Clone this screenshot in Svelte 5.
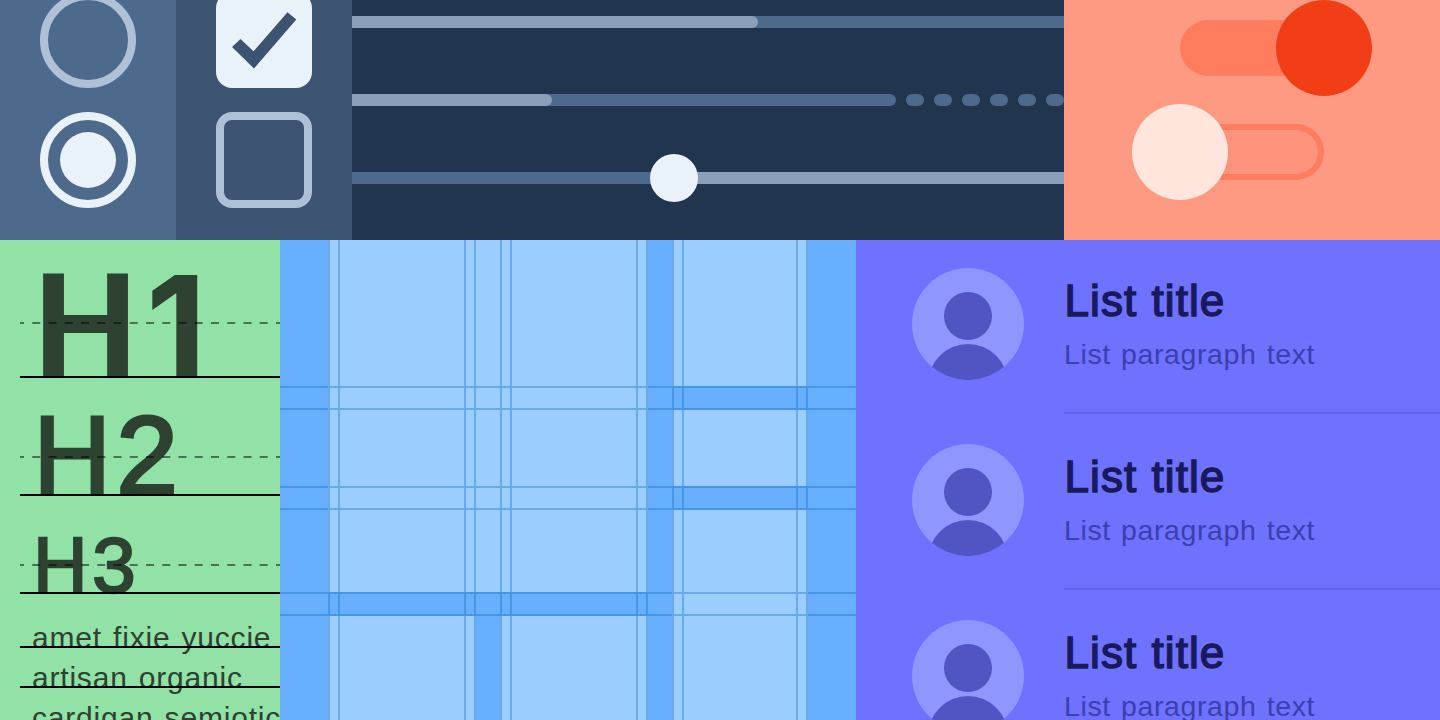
<script>
  const columns = [48, 12, 124, 12, 24, 12, 124, 12, 24, 12, 112, 12, 48];
  const rows = [146, 24, 76, 24, 82, 24, 104];
  const insets = [1, 3, 5, 7, 9, 11];

  function isGutter(r, c) {
    if (c === 0 || c === 8 || c === 12) return true;
    if (c > 8) return r === 1 || r === 3;
    return r === 5 || (r === 6 && c === 4);
  }

  const cells = rows.flatMap((_, r) =>
    columns.map((_, c) => ({
      gutter: isGutter(r, c),
      sides: insets.includes(c),
      ends: r % 2 === 1
    }))
  );

  const template = (sizes) => sizes.map((s) => `${s}px`).join(' ');
  const people = [1, 2, 3];
  const copy = ['amet fixie yuccie', 'artisan organic', 'cardigan semiotics'];
</script>

{#snippet midline()}
  <svg class="midline" width="260" height="2" viewBox="0 0 260 2" aria-hidden="true">
    <line x1="0" y1="1" x2="260" y2="1" stroke="#000" stroke-opacity="0.5" stroke-width="2" stroke-dasharray="8 8.25" stroke-dashoffset="4" />
  </svg>
{/snippet}

<main>
  <div class="top">
    <section class="choices radios">
      <span class="radio"></span>
      <span class="radio on"><i></i></span>
    </section>
    <section class="choices checks">
      <span class="check on">
        <svg width="96" height="96" viewBox="0 0 96 96"><path d="M16 55 24.5 47 37.5 59.3 71.5 20.2 80.3 27.6 38 76.6Z" fill="#3c5472" /></svg>
      </span>
      <span class="check"></span>
    </section>
    <section class="sliders">
      <div class="bar full"><div class="fill first"></div></div>
      <div class="buffer">
        <div class="bar loaded"><div class="fill second"></div></div>
        {#each Array(6) as _}<i class="dash"></i>{/each}
      </div>
      <div class="range">
        <div class="bar left"></div>
        <div class="bar right"></div>
        <span class="thumb"></span>
      </div>
    </section>
    <section class="toggles">
      <div class="toggle on"><span class="knob"></span></div>
      <div class="toggle off"><span class="knob"></span></div>
    </section>
  </div>

  <div class="bottom">
    <section class="type">
      <div class="sample s1">
        <h1><b>H</b><span>1</span></h1>
        {@render midline()}
      </div>
      <div class="sample s2">
        <h2><b>H</b>2</h2>
        {@render midline()}
      </div>
      <div class="sample s3">
        <h3><b>H</b>3</h3>
        {@render midline()}
      </div>
      <div class="copy">
        {#each copy as line}
          <p>{line}</p>
        {/each}
      </div>
    </section>

    <section class="layout" style:grid-template-columns={template(columns)} style:grid-template-rows={template(rows)}>
      {#each cells as cell}
        <div class="cell" class:gutter={cell.gutter} class:sides={cell.sides} class:ends={cell.ends}></div>
      {/each}
    </section>

    <section class="list">
      {#each people as person (person)}
        <article>
          <div class="avatar">
            <svg width="112" height="112" viewBox="0 0 112 112">
              <circle cx="56" cy="48" r="24" fill="#5155c3" />
              <circle cx="56" cy="116" r="40" fill="#5155c3" />
            </svg>
          </div>
          <div class="info">
            <h4>List title</h4>
            <p>List paragraph text</p>
          </div>
        </article>
      {/each}
    </section>
  </div>
</main>

<style>
  :global(body) { margin: 0; overflow: hidden; }
  main {
    width: 1440px;
    height: 720px;
    overflow: hidden;
    font-family: "Liberation Sans", Arial, sans-serif;
  }
  main, main * { box-sizing: border-box; }
  h1, h2, h3, h4, p { margin: 0; font-weight: 400; }
  svg { display: block; }
  section { overflow: hidden; }
  .top { display: grid; grid-template-columns: 176px 176px 712px 376px; height: 240px; }
  .bottom { display: grid; grid-template-columns: 280px 576px 584px; height: 480px; }

  .choices { display: flex; flex-direction: column; align-items: center; gap: 24px; }
  .choices > :first-child { margin-top: -8px; }
  .radios { background: #4d698c; }
  .checks { background: #3c5472; }
  .radio, .check { flex: none; display: grid; place-items: center; width: 96px; height: 96px; border: 8px solid #afc0d9; }
  .radio { border-radius: 50%; }
  .radio.on { border-color: #e9f1f9; }
  .radio i { width: 56px; height: 56px; border-radius: 50%; background: #e9f1f9; }
  .check { border-radius: 16px; }
  .check.on { border: 0; background: #e9f1f9; }

  .sliders { background: #22354e; padding-top: 16px; display: flex; flex-direction: column; gap: 66px; }
  .bar { height: 12px; background: #4d698c; }
  .fill { height: 12px; background: #8b9fba; border-radius: 0 6px 6px 0; }
  .first { width: 406px; }
  .second { width: 200px; }
  .buffer { display: flex; gap: 10px; }
  .loaded { width: 544px; border-radius: 0 6px 6px 0; }
  .dash { width: 18px; height: 12px; border-radius: 6px; background: #4d698c; }
  .range { display: flex; position: relative; }
  .left { width: 322px; }
  .right { flex: 1; background: #8b9fba; }
  .thumb { position: absolute; left: 298px; top: -18px; width: 48px; height: 48px; border-radius: 50%; background: #e9f1f9; }

  .toggles { background: #ff9a82; padding: 20px 0 0 116px; display: flex; flex-direction: column; gap: 48px; }
  .toggle { position: relative; width: 144px; height: 56px; border-radius: 28px; background: #ff7c5e; }
  .toggle.off { background: #ff937b; box-shadow: inset 0 0 0 6px #ff7c5e; }
  .knob { position: absolute; top: -20px; width: 96px; height: 96px; border-radius: 50%; }
  .on .knob { right: -48px; background: #f13e17; }
  .off .knob { left: -48px; background: #ffe5db; }

  .type { background: #92e2a7; color: #2d4231; padding-left: 20px; white-space: nowrap; }
  .sample { position: relative; border-bottom: 2px solid #000; }
  .sample h1, .sample h2, .sample h3 { position: absolute; left: 12px; bottom: -1px; line-height: 0; height: 0; }
  .sample b { display: inline-block; font-weight: inherit; transform-origin: left; }
  .midline { position: absolute; left: 0; }
  .s1 { height: 138px; }
  .s1 .midline { top: 82px; }
  .s2 { height: 118px; }
  .s2 .midline { top: 78px; }
  .s3 { height: 98px; }
  .s3 .midline { top: 68px; }
  .sample::after { content: ""; position: absolute; left: 0; right: 0; bottom: -2px; height: 2px; background: #000; }
  h1 { font-size: 151px; font-weight: 700; transform: translateY(-51.9px); }
  h1 b { transform: translateX(1.6px) scaleX(0.955); }
  h1 span { font-family: Inter, sans-serif; font-size: 140px; margin-left: 5px; }
  h2 { font-size: 111px; letter-spacing: 4px; -webkit-text-stroke: 3.2px #2d4231; transform: translateY(-39.2px); }
  h2 b { transform: translateX(1.4px) scaleX(0.965); }
  h3 { font-size: 78px; letter-spacing: 3.8px; -webkit-text-stroke: 2.4px #2d4231; transform: translateY(-27.8px); }
  h3 b { transform: translateX(1.2px) scaleX(0.96); }
  .copy p { position: relative; height: 40px; padding-left: 12px; font-size: 30px; line-height: 40px; letter-spacing: 0.8px; word-spacing: 2px; }
  .copy { padding-top: 24px; }
  .copy p::after { content: ""; position: absolute; left: 0; right: 0; bottom: 10px; height: 2px; background: #000; }

  .layout { display: grid; }
  .cell { background: #9bcdff; border: 0 solid #6aaae8; }
  .gutter { background: #68b0ff; border-color: #4796e8; }
  .sides { border-left-width: 2px; border-right-width: 2px; }
  .ends { border-top-width: 2px; border-bottom-width: 2px; }

  .list { background: #6e72ff; }
  article { display: flex; gap: 40px; height: 176px; padding: 28px 0 0 56px; }
  .avatar { flex: none; width: 112px; height: 112px; border-radius: 50%; overflow: hidden; background: #8e96ff; }
  .info { flex: 1; height: 146px; border-bottom: 2px solid #6265e6; white-space: nowrap; }
  h4 { margin-top: 8px; font-size: 44px; line-height: 50px; letter-spacing: 1.05px; text-indent: 0.6px; word-spacing: 1px; color: #181a5c; -webkit-text-stroke: 1.5px #181a5c; }
  .info p { margin-top: 11px; font-size: 28.5px; line-height: 34px; letter-spacing: 0.6px; word-spacing: 1.8px; color: #3c3fb0; }
</style>
